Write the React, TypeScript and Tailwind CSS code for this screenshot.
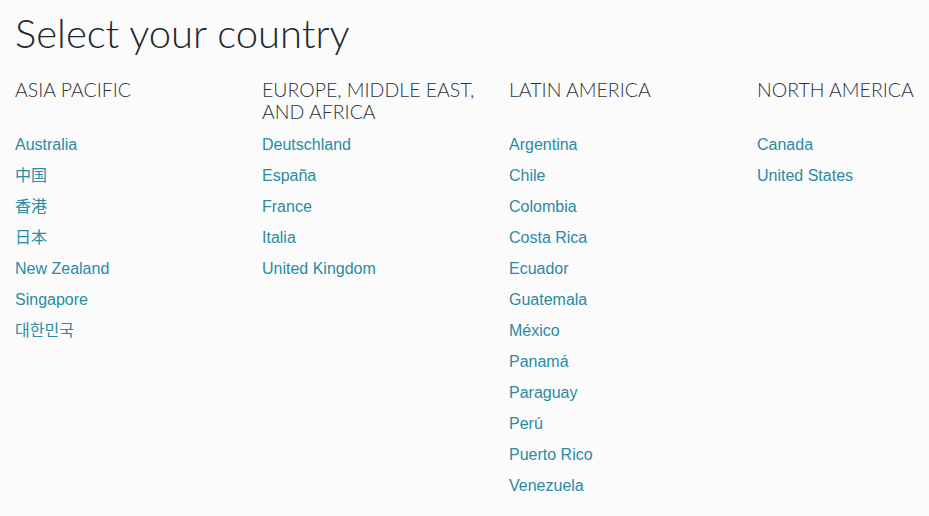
const regions = [
  {
    name: 'ASIA PACIFIC',
    countries: ['Australia', '中国', '香港', '日本', 'New Zealand', 'Singapore', '대한민국'],
  },
  {
    name: 'EUROPE, MIDDLE EAST, AND AFRICA',
    countries: ['Deutschland', 'España', 'France', 'Italia', 'United Kingdom'],
  },
  {
    name: 'LATIN AMERICA',
    countries: [
      'Argentina', 'Chile', 'Colombia', 'Costa Rica', 'Ecuador', 'Guatemala',
      'México', 'Panamá', 'Paraguay', 'Perú', 'Puerto Rico', 'Venezuela',
    ],
  },
  {
    name: 'NORTH AMERICA',
    countries: ['Canada', 'United States'],
  },
];

export default function App() {
  return (
    <div className="min-h-[516px] bg-[#fbfbfb] px-[15px] pt-[9px] font-['Lato',sans-serif]">
      <h1 className="text-[40px] leading-[48px] font-light text-[#1d2930]">Select your country</h1>

      <div className="mt-[22px] grid grid-cols-[247px_247px_248px_1fr]">
        {regions.map((r) => (
          <div key={r.name}>
            <h2 className="h-[44px] text-[19.5px] leading-[22px] font-light uppercase text-[#2c3339]">{r.name}</h2>
            <ul className="mt-[6px] font-['Liberation_Sans','Noto_Sans_CJK_KR',sans-serif] text-[16px] leading-[31px] text-[#2a8ba3]">
              {r.countries.map((c) => (
                <li key={c}>
                  <a href="#" className="hover:underline">{c}</a>
                </li>
              ))}
            </ul>
          </div>
        ))}
      </div>
    </div>
  );
}
